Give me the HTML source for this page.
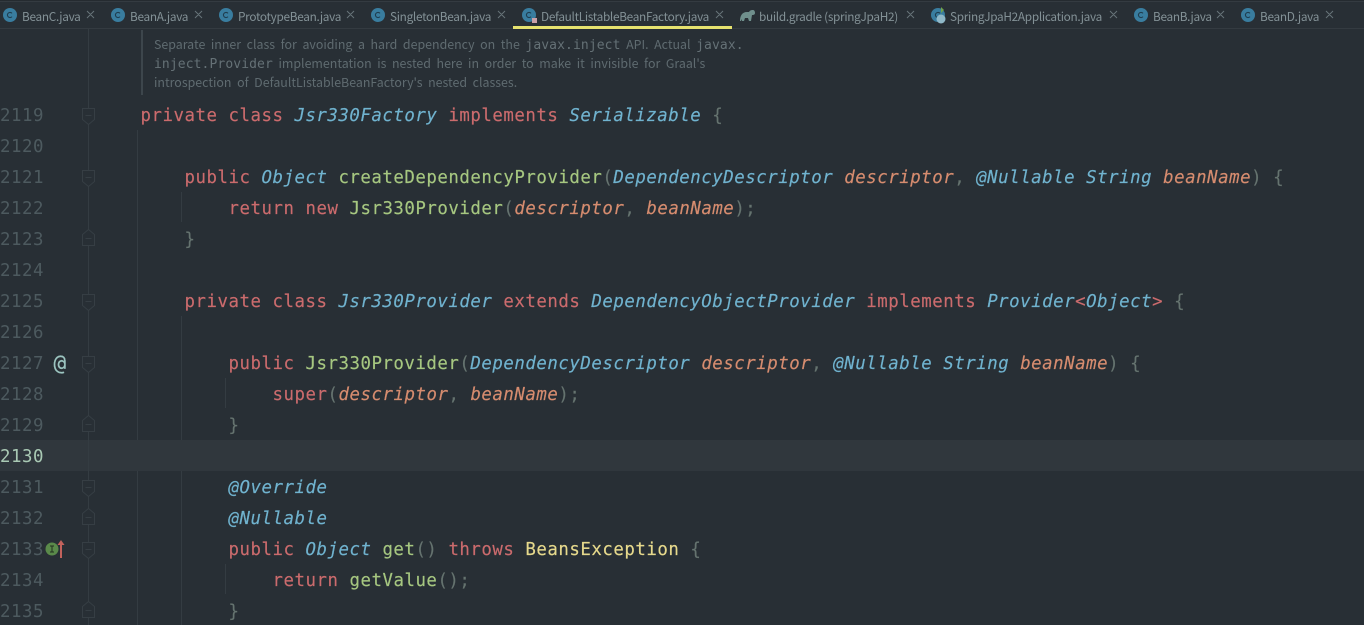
<!DOCTYPE html>
<html><head><meta charset="utf-8">
<style>
html,body{margin:0;padding:0;background:#282f35;width:1364px;height:625px;overflow:hidden}
#r{position:relative;width:1364px;height:625px;overflow:hidden;background:#282f35}
.t{position:absolute;top:7px;height:20px;font:11.8px/20px "Noto Sans CJK KR","Liberation Sans",sans-serif;letter-spacing:-.3px;color:#839196;white-space:pre}
.l{position:absolute;left:0;height:31px;line-height:31px;font-family:"DejaVu Sans Mono",monospace;font-size:17.4px;letter-spacing:.525px;white-space:pre;color:#a9b7b6;-webkit-text-stroke:.15px currentColor;margin-top:2px}
.n{position:absolute;left:0;height:31px;line-height:31px;font-family:"DejaVu Sans Mono",monospace;font-size:17.4px;letter-spacing:.525px;color:#4d5a5f;margin-top:2px}
.d{position:absolute;left:154px;font:12.4px/20px "Noto Sans CJK KR","Liberation Sans",sans-serif;color:#5f6b70;white-space:pre;word-spacing:2.8px}
.d b{font:400 13px "DejaVu Sans Mono",monospace;color:#657176;letter-spacing:.1px;word-spacing:0}
.k{color:#cb6b6d}.c{color:#70b3cf;font-style:italic}.m{color:#a6c780}.p{color:#d68c6f;font-style:italic}.g{color:#65736f}.y{color:#e6d98c}
</style></head><body><div id="r">
<svg width="1364" height="625" style="position:absolute;left:0;top:0">
<rect x="0" y="440" width="1364" height="31" fill="#30373d"/>
<rect x="0" y="0" width="1364" height="1" fill="#252b30"/>
<rect x="0" y="1" width="1364" height="1" fill="#343b41"/>
<rect x="0" y="28" width="1364" height="1" fill="#343b41"/>
<rect x="513" y="26" width="219" height="3" fill="#e6e26f"/>
<g fill="#397d9f">
<circle cx="10" cy="15" r="7"/><circle cx="118" cy="15" r="7"/><circle cx="226" cy="15" r="7"/><circle cx="378" cy="15" r="7"/><circle cx="529" cy="15" r="7"/><circle cx="938" cy="15" r="7"/><circle cx="1141" cy="15" r="7"/><circle cx="1248" cy="15" r="7"/>
</g>
<g fill="none" stroke="#1f3e50" stroke-width="1.1">
<path d="M12 13.3a2.6 2.6 0 1 0 0 3.4M120 13.3a2.6 2.6 0 1 0 0 3.4M228 13.3a2.6 2.6 0 1 0 0 3.4M380 13.3a2.6 2.6 0 1 0 0 3.4M531 13.3a2.6 2.6 0 1 0 0 3.4M940 13.3a2.6 2.6 0 1 0 0 3.4M1143 13.3a2.6 2.6 0 1 0 0 3.4M1250 13.3a2.6 2.6 0 1 0 0 3.4"/>
</g>
<rect x="532" y="18" width="5" height="5" fill="#c9a0a8"/>
<circle cx="941" cy="19" r="4.500" fill="#8fb8c8"/><path d="M941 7l3 3-3 3z" fill="#6fa34f"/>
<path d="M740 21c0-5 2-9 7-9h2c1-2 3-2 4-2s2 1 2 3-2 2-3 2l-1 6h-2l-1-3h-3l-1 3h-2v-2l-1 2z" fill="#6f8f8c"/>
<g stroke="#677479" stroke-width="1" fill="none">
<path d="M87 11l7 7M94 11l-7 7M195 11l7 7M202 11l-7 7M347 11l7 7M354 11l-7 7M498 11l7 7M505 11l-7 7M716 11l7 7M723 11l-7 7M907 11l7 7M914 11l-7 7M1110 11l7 7M1117 11l-7 7M1217 11l7 7M1224 11l-7 7M1326 11l7 7M1333 11l-7 7"/>
</g>
<g stroke="#343c42" stroke-width="1" fill="none">
<path d="M88.500 29V625"/>
<path d="M137.500 130V440M137.500 471V625"/>
<path d="M181.500 316V440M181.500 471V625"/>
<path d="M181.500 192V222M225.500 378V408M225.500 564V594"/>
</g>
<rect x="141" y="30" width="2" height="65" fill="#3d464c"/>
<g fill="#282f35" stroke="#363e44" stroke-width="1">
<path d="M82.500 108.500h12v11l-6 5-6-5z"/>
<path d="M82.500 170.500h12v11l-6 5-6-5z"/>
<path d="M82.500 294.500h12v11l-6 5-6-5z"/>
<path d="M82.500 356.500h12v11l-6 5-6-5z"/>
<path d="M82.500 480.500h12v11l-6 5-6-5z"/>
<path d="M82.500 542.500h12v11l-6 5-6-5z"/>
<path d="M82.500 245.500h12v-11l-6-5-6 5z"/>
<path d="M82.500 431.500h12v-11l-6-5-6 5z"/>
<path d="M82.500 524.500h12v-11l-6-5-6 5z"/>
<path d="M82.500 617.500h12v-11l-6-5-6 5z"/>
</g>
<g stroke="#363e44"><path d="M85.500 115.500h6M85.500 177.500h6M85.500 301.500h6M85.500 363.500h6M85.500 487.500h6M85.500 549.500h6M85.500 238.500h6M85.500 424.500h6M85.500 517.500h6M85.500 610.500h6"/></g>
<circle cx="52" cy="549" r="6.500" fill="#5a8a4a"/>
<path d="M50 546h4M52 546v6M50 552h4" stroke="#22301f" fill="none"/>
<path d="M61 558V542" stroke="#c2625c" stroke-width="2"/><path d="M57.500 545l3.500-5 3.500 5z" fill="#c2625c"/>
</svg>

<div class="t" style="left:22px">BeanC.java</div>
<div class="t" style="left:130px">BeanA.java</div>
<div class="t" style="left:238px">PrototypeBean.java</div>
<div class="t" style="left:390px">SingletonBean.java</div>
<div class="t" style="left:541px">DefaultListableBeanFactory.java</div>
<div class="t" style="left:759px">build.gradle (springJpaH2)</div>
<div class="t" style="left:950px">SpringJpaH2Application.java</div>
<div class="t" style="left:1153px">BeanB.java</div>
<div class="t" style="left:1260px">BeanD.java</div>

<div class="d" style="top:34px">Separate inner class for avoiding a hard dependency on the <b>javax.inject</b> API. Actual <b>javax.</b></div>
<div class="d" style="top:53px"><b>inject.Provider</b> implementation is nested here in order to make it invisible for Graal's</div>
<div class="d" style="top:72px">introspection of DefaultListableBeanFactory's nested classes.</div>

<div class="n" style="top:99px">2119</div>
<div class="n" style="top:130px">2120</div>
<div class="n" style="top:161px">2121</div>
<div class="n" style="top:192px">2122</div>
<div class="n" style="top:223px">2123</div>
<div class="n" style="top:254px">2124</div>
<div class="n" style="top:285px">2125</div>
<div class="n" style="top:316px">2126</div>
<div class="n" style="top:347px">2127</div>
<div class="n" style="top:378px">2128</div>
<div class="n" style="top:409px">2129</div>
<div class="n" style="top:440px;color:#a9c9b4">2130</div>
<div class="n" style="top:471px">2131</div>
<div class="n" style="top:502px">2132</div>
<div class="n" style="top:533px">2133</div>
<div class="n" style="top:564px">2134</div>
<div class="n" style="top:595px">2135</div>
<div class="l" style="top:346px;left:53.500px;color:#9cc5c0;font-size:21px;letter-spacing:0">@</div>

<div class="l" style="top:99px;left:140.500px"><span class="k">private class </span><span class="c">Jsr330Factory </span><span class="k">implements </span><span class="c">Serializable </span><span class="g">{</span></div>
<div class="l" style="top:161px;left:184.500px"><span class="k">public </span><span class="c">Object </span><span class="m">createDependencyProvider</span><span class="g">(</span><span class="c">DependencyDescriptor </span><span class="p">descriptor</span><span class="g">, </span><span class="c">@Nullable String </span><span class="p">beanName</span><span class="g">) {</span></div>
<div class="l" style="top:192px;left:228.500px"><span class="k">return new </span><span class="m">Jsr330Provider</span><span class="g">(</span><span class="p">descriptor</span><span class="g">, </span><span class="p">beanName</span><span class="g">);</span></div>
<div class="l" style="top:223px;left:184.500px"><span class="g">}</span></div>
<div class="l" style="top:285px;left:184.500px"><span class="k">private class </span><span class="c">Jsr330Provider </span><span class="k">extends </span><span class="c">DependencyObjectProvider </span><span class="k">implements </span><span class="c">Provider</span><span class="k">&lt;</span><span class="c">Object</span><span class="k">&gt; </span><span class="g">{</span></div>
<div class="l" style="top:347px;left:228.500px"><span class="k">public </span><span class="m">Jsr330Provider</span><span class="g">(</span><span class="c">DependencyDescriptor </span><span class="p">descriptor</span><span class="g">, </span><span class="c">@Nullable String </span><span class="p">beanName</span><span class="g">) {</span></div>
<div class="l" style="top:378px;left:272.500px"><span class="k">super</span><span class="g">(</span><span class="p">descriptor</span><span class="g">, </span><span class="p">beanName</span><span class="g">);</span></div>
<div class="l" style="top:409px;left:228.500px"><span class="g">}</span></div>
<div class="l" style="top:471px;left:228.500px"><span class="c">@Override</span></div>
<div class="l" style="top:502px;left:228.500px"><span class="c">@Nullable</span></div>
<div class="l" style="top:533px;left:228.500px"><span class="k">public </span><span class="c">Object </span><span class="m">get</span><span class="g">() </span><span class="k">throws </span><span class="y">BeansException </span><span class="g">{</span></div>
<div class="l" style="top:564px;left:272.500px"><span class="k">return </span><span class="m">getValue</span><span class="g">();</span></div>
<div class="l" style="top:595px;left:228.500px"><span class="g">}</span></div>
</div></body></html>
